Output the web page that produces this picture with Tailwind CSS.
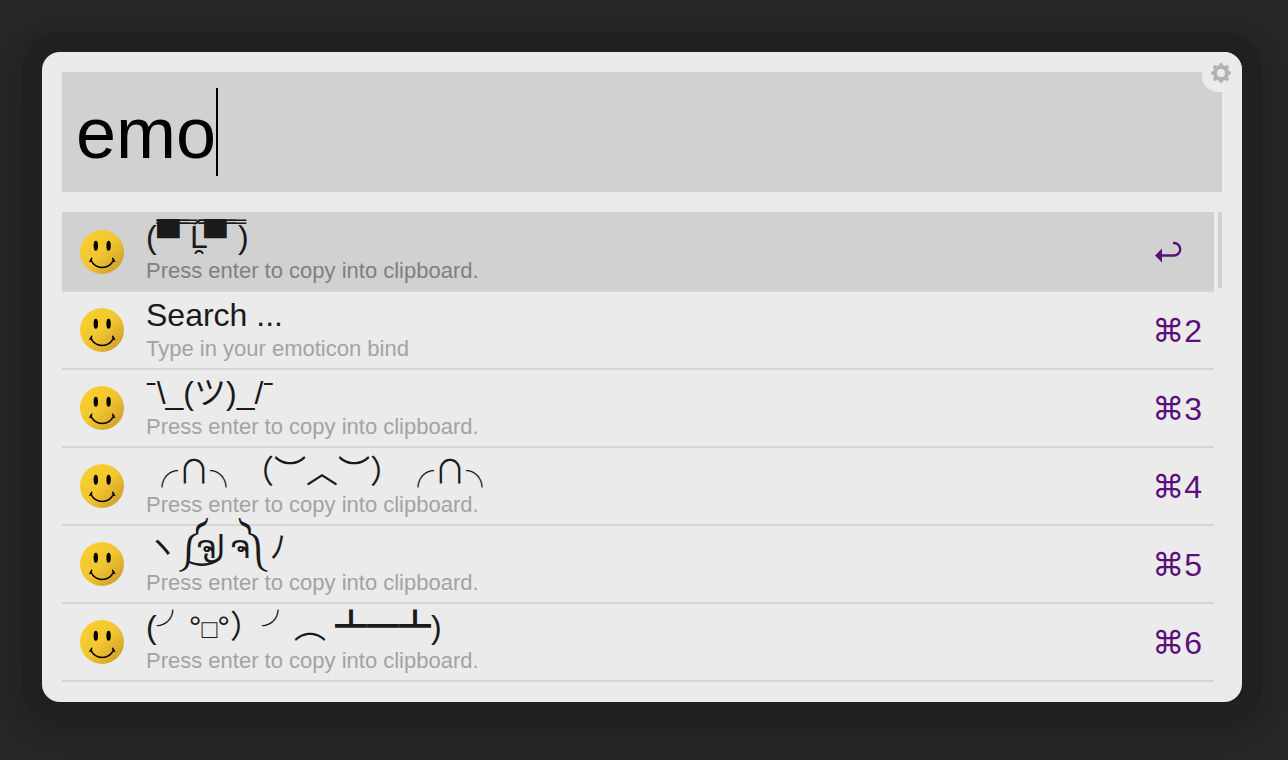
<!DOCTYPE html>
<html lang="en">
<head>
<meta charset="utf-8">
<meta name="viewport" content="width=device-width, initial-scale=1">
<title>Emoticon launcher</title>
<script src="https://cdn.jsdelivr.net/npm/@tailwindcss/browser@4"></script>
</head>
<body class="min-h-screen bg-[#272727] py-[52px] pr-[46px] pl-[42px] font-['Liberation_Sans','Noto_Sans_CJK_JP','DejaVu_Sans',sans-serif]">
<svg class="absolute size-0" aria-hidden="true">
  <defs>
    <linearGradient id="gold" x1="0.1" y1="0.1" x2="0.9" y2="0.9">
      <stop offset="0" stop-color="#f9cf2f"/><stop offset="0.5" stop-color="#f2c630"/><stop offset="1" stop-color="#cf9f2a"/>
    </linearGradient>
    <symbol id="smiley" viewBox="0 0 44 44">
      <circle cx="22" cy="22" r="22" fill="url(#gold)"/>
      <ellipse cx="15.8" cy="15.7" rx="2.2" ry="5" fill="#000"/>
      <ellipse cx="28.6" cy="15.7" rx="2.2" ry="5" fill="#000"/>
      <path d="M10.600 29.600C13 34.500 17 37.500 22.200 37.500S31.400 34.500 33.800 29.600M9.800 31.400q1.800-.8 1.900-3.200M34.600 31.400q-1.800-.8-1.900-3.200" fill="none" stroke="#000" stroke-width="1.500" stroke-linecap="round"/>
    </symbol>
  </defs>
</svg>
<main class="relative rounded-[18px] bg-[#ebebeb] p-5 shadow-[0_0_0_20px_#202020,0_8px_36px_16px_#1c1c1c]">
  <label class="relative block bg-[#d1d1d1]">
    <input type="text" aria-label="Search" value="emo" class="block h-[120px] w-full bg-transparent pt-[2px] pr-12 pl-[14px] text-[72px] text-black outline-none">
    <span class="absolute top-4 left-[154px] h-[88px] w-[2px] bg-black"></span>
  </label>
  <button type="button" aria-label="Preferences" class="absolute top-0 right-0 flex size-10 items-center justify-center rounded-tr-[18px] rounded-bl-[16px] bg-[#ebebeb] pt-[2px] pr-[2px]">
    <svg class="size-5" viewBox="-10 -10 20 20" aria-hidden="true">
      <circle r="6" fill="none" stroke="#b2b2b2" stroke-width="4"/>
      <g stroke="#b2b2b2" stroke-width="4" stroke-linecap="round"><path d="M0-6.500V-8M0 6.500V8M-6.500 0H-8M6.500 0H8M4.900-4.900l1-1M-4.900-4.900l-1-1M4.900 4.900l1 1M-4.900 4.900l-1 1"/></g>
    </svg>
  </button>
  <div class="mt-5 flex gap-1">
    <ul class="min-w-0 flex-1 text-[32px] leading-9 text-[#1a1a1a]">
      <li><button type="button" class="flex h-20 w-full items-center border-b-2 border-[#d5d5d5] bg-[#d1d1d1] pt-[2px] pr-3 pl-[18px] text-left">
        <svg class="size-11 shrink-0" aria-hidden="true"><use href="#smiley"/></svg>
        <span class="ml-[22px] flex-1"><span class="flex h-[38px] whitespace-pre"><span class="w-[11px]">( ̿</span><span class="w-[22px]">▀̿</span><span class="w-[11px]"> ̿</span><span class="w-[14px]">Ĺ̯̿̿</span><span class="w-6">▀̿</span><span class="w-[10px]"> ̿</span><span>)</span></span><span class="block text-[22px] leading-7 text-[#808080]">Press enter to copy into clipboard.</span></span>
        <svg class="mr-5 h-[22px] w-7 text-[#5b0f7d]" viewBox="0 0 28 22" aria-hidden="true"><path d="M1 14.500 8 7.500v14z" fill="currentColor"/><path d="M6 14.500H20A6.200 6.200 0 0 0 20 2H19" fill="none" stroke="currentColor" stroke-width="2.400"/></svg>
      </button></li>
      <li><button type="button" class="flex h-[78px] w-full items-center border-b-2 border-[#d5d5d5] pr-3 pl-[18px] text-left">
        <svg class="size-11 shrink-0" aria-hidden="true"><use href="#smiley"/></svg>
        <span class="ml-[22px] flex-1"><span class="block h-[38px] whitespace-pre">Search ...</span><span class="block text-[22px] leading-7 text-[#a3a3a3]">Type in your emoticon bind</span></span>
        <span class="pt-[2px] text-[#5b0f7d]"><span class="font-['DejaVu_Sans']">⌘</span>2</span>
      </button></li>
      <li><button type="button" class="flex h-[78px] w-full items-center border-b-2 border-[#d5d5d5] pr-3 pl-[18px] text-left">
        <svg class="size-11 shrink-0" aria-hidden="true"><use href="#smiley"/></svg>
        <span class="ml-[22px] flex-1"><span class="block h-[38px] whitespace-pre">ˉ\_(ツ)_/ˉ</span><span class="block text-[22px] leading-7 text-[#a3a3a3]">Press enter to copy into clipboard.</span></span>
        <span class="pt-[2px] text-[#5b0f7d]"><span class="font-['DejaVu_Sans']">⌘</span>3</span>
      </button></li>
      <li><button type="button" class="flex h-[78px] w-full items-center border-b-2 border-[#d5d5d5] pr-3 pl-[18px] text-left">
        <svg class="size-11 shrink-0" aria-hidden="true"><use href="#smiley"/></svg>
        <span class="ml-[22px] flex-1"><span class="block h-[38px] font-['Noto_Sans_CJK_JP',sans-serif] leading-8 whitespace-pre">╭∩╮（︶︿︶）╭∩╮</span><span class="block text-[22px] leading-7 text-[#a3a3a3]">Press enter to copy into clipboard.</span></span>
        <span class="pt-[2px] text-[#5b0f7d]"><span class="font-['DejaVu_Sans']">⌘</span>4</span>
      </button></li>
      <li><button type="button" class="flex h-[78px] w-full items-center border-b-2 border-[#d5d5d5] pr-3 pl-[18px] text-left">
        <svg class="size-11 shrink-0" aria-hidden="true"><use href="#smiley"/></svg>
        <span class="ml-[22px] flex-1"><span class="flex h-[38px] leading-8 whitespace-pre"><span class="w-8">ヽ</span><span class="w-[18px] text-[36px] leading-6">༼</span><span class="w-[6px]">ຈ</span><span class="w-[28px]">ل͜</span><span class="w-[9px]">ຈ</span><span class="w-[31px] text-[36px] leading-6">༽</span><span>ﾉ</span></span><span class="block text-[22px] leading-7 text-[#a3a3a3]">Press enter to copy into clipboard.</span></span>
        <span class="pt-[2px] text-[#5b0f7d]"><span class="font-['DejaVu_Sans']">⌘</span>5</span>
      </button></li>
      <li><button type="button" class="flex h-[78px] w-full items-center border-b-2 border-[#d5d5d5] pr-3 pl-[18px] text-left">
        <svg class="size-11 shrink-0" aria-hidden="true"><use href="#smiley"/></svg>
        <span class="ml-[22px] flex-1"><span class="block h-[38px] leading-[30px] whitespace-pre">(<span class="font-['Noto_Sans_CJK_JP']">╯</span>°<span class="text-[26px]">□</span>°）<span class="font-['Noto_Sans_CJK_JP']">╯︵</span> <span class="font-['Noto_Sans_CJK_JP']">┻━┻</span>)</span><span class="block text-[22px] leading-7 text-[#a3a3a3]">Press enter to copy into clipboard.</span></span>
        <span class="pt-[2px] text-[#5b0f7d]"><span class="font-['DejaVu_Sans']">⌘</span>6</span>
      </button></li>
    </ul>
    <div class="h-[76px] w-1 bg-[#d1d1d1]"></div>
  </div>
</main>
</body>
</html>
